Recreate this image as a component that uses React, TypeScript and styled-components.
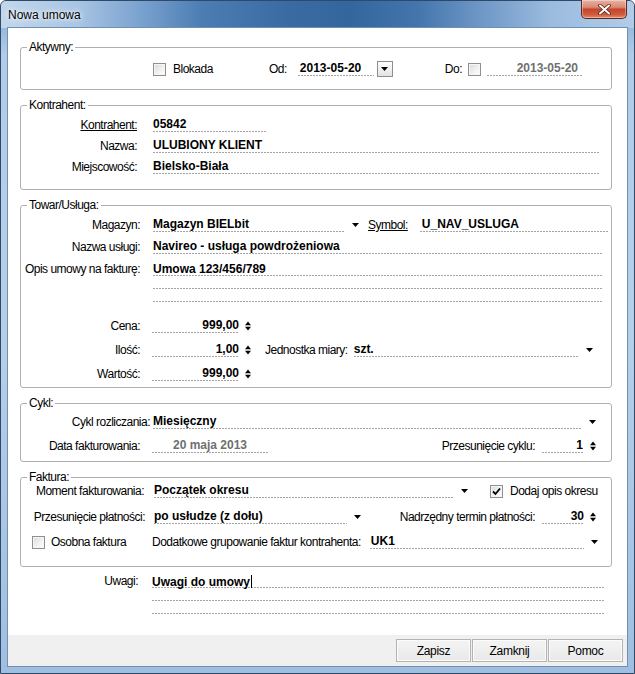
import styled, { createGlobalStyle } from "styled-components";

const GlobalStyle = createGlobalStyle`
  html, body {
    margin: 0;
    padding: 0;
    background: #ffffff;
  }

  body {
    font-family: "Liberation Sans", Arial, sans-serif;
    font-size: 12px;
    color: #000;
  }
`;

const Window = styled.div`
  box-sizing: border-box;
  width: 635px;
  height: 674px;
  display: flex;
  flex-direction: column;
  padding: 0 7px 7px 7px;
  border: 1px solid #2f4a68;
  border-radius: 6px 6px 0 0;
  background-color: #a4c2e3;
  background-image: linear-gradient(to bottom, #7fa6d1 0%, #b2cce8 8%, #b6cfe9 50%, #a0bfe0 100%);
`;

const TitleBar = styled.div`
  height: 27px;
  margin: 0 -7px;
  padding: 0 7px;
  display: flex;
  align-items: flex-start;
  justify-content: space-between;
  border-radius: 5px 5px 0 0;
  background-color: #5a87b9;
  background-image: linear-gradient(to right, #c3d7ec 0%, #a9c5e3 12%, #7aa2cf 22%, #4b7cb2 32%, #3a6ba2 45%, #34669e 55%, #4476ad 66%, #6f98c6 76%, #9bbcdf 87%, #b2cce8 100%);
`;

const Title = styled.span`
  margin-top: 7px;
  font-size: 12px;
  color: #000;
  text-shadow: 0 0 7px rgba(255, 255, 255, 0.95), 0 0 3px rgba(255, 255, 255, 0.95);
`;

const CloseButton = styled.div`
  box-sizing: border-box;
  width: 46px;
  height: 19px;
  margin-top: -1px;
  display: flex;
  align-items: center;
  justify-content: center;
  border: 1px solid #5a2a20;
  border-top: none;
  border-radius: 0 0 5px 5px;
  background: linear-gradient(to bottom, #eab2a4 0%, #d98a74 40%, #c4462c 52%, #cf5a3c 80%, #e58b6c 100%);
  box-shadow: inset 0 0 0 1px rgba(255, 255, 255, 0.35);
`;

const Client = styled.div`
  flex: 1;
  display: flex;
  flex-direction: column;
  background: #ffffff;
  box-shadow: 0 0 0 1px #6f8fb3;
`;

const Content = styled.div`
  flex: 1;
  padding: 12px 15px 0 12px;
`;

const GroupBox = styled.fieldset<{ $pt: number; $pb: number }>`
  margin: 0 0 8px 0;
  padding: ${(p) => p.$pt}px 0 ${(p) => p.$pb}px 0;
  border: 1px solid #afafaf;
  border-radius: 3px;
  min-width: 0;
`;

const Legend = styled.legend`
  margin-left: 6px;
  padding: 0 2px;
  line-height: 14px;
  font-size: 12px;
  letter-spacing: -0.5px;
`;

const Row = styled.div<{ $h: number; $mt?: number; $pl?: number }>`
  display: flex;
  align-items: center;
  height: ${(p) => p.$h}px;
  margin-top: ${(p) => p.$mt ?? 0}px;
  padding-left: ${(p) => p.$pl ?? 0}px;
`;

const TopRow = styled.div<{ $mt?: number }>`
  display: flex;
  align-items: flex-start;
  margin-top: ${(p) => p.$mt ?? 0}px;
`;

const Label = styled.span<{ $w: number; $gap: number; $lh?: number; $link?: boolean }>`
  flex-shrink: 0;
  width: ${(p) => p.$w}px;
  margin-right: ${(p) => p.$gap}px;
  text-align: right;
  white-space: nowrap;
  letter-spacing: -0.5px;
  line-height: ${(p) => p.$lh ?? 14}px;
  text-decoration: ${(p) => (p.$link ? "underline" : "none")};
`;

const Text = styled.span<{ $ml?: number; $link?: boolean }>`
  flex-shrink: 0;
  margin-left: ${(p) => p.$ml ?? 0}px;
  white-space: nowrap;
  letter-spacing: -0.5px;
  text-decoration: ${(p) => (p.$link ? "underline" : "none")};
`;

const dashes = `
  background-image: repeating-linear-gradient(to right, #a3a3a3 0 2px, transparent 2px 3px);
  background-size: 100% 1px;
  background-position: left bottom;
  background-repeat: no-repeat;
`;

const Field = styled.div<{ $w: number; $ml?: number; $align?: string; $muted?: boolean; $pl?: number; $pr?: number }>`
  box-sizing: border-box;
  flex-shrink: 0;
  width: ${(p) => p.$w}px;
  height: 14px;
  margin-left: ${(p) => p.$ml ?? 0}px;
  padding: 0 ${(p) => p.$pr ?? 0}px 0 ${(p) => p.$pl ?? 0}px;
  line-height: 13px;
  font-weight: bold;
  white-space: nowrap;
  text-align: ${(p) => p.$align ?? "left"};
  color: ${(p) => (p.$muted ? "#6f6f6f" : "#000")};
  ${dashes}
`;

const TextArea = styled.div<{ $w: number; $mt?: number }>`
  flex-shrink: 0;
  width: ${(p) => p.$w}px;
  margin-top: ${(p) => p.$mt ?? 0}px;
`;

const Line = styled.div`
  height: 13px;
  line-height: 12px;
  font-weight: bold;
  white-space: nowrap;
  ${dashes}
`;

const Caret = styled.span`
  display: inline-block;
  width: 1px;
  height: 13px;
  margin-left: 1px;
  vertical-align: -2px;
  background: #000;
`;

const Box = styled.span<{ $ml?: number }>`
  box-sizing: border-box;
  flex-shrink: 0;
  width: 13px;
  height: 13px;
  margin-left: ${(p) => p.$ml ?? 0}px;
  display: inline-flex;
  align-items: center;
  justify-content: center;
  border: 1px solid #8e8f8f;
  background: linear-gradient(135deg, #d9d9d9 0%, #f3f3f3 60%, #ffffff 100%);
  box-shadow: inset 0 0 0 1px #f6f6f6;
`;

const CheckGroup = styled.div<{ $w?: number; $ml?: number }>`
  flex-shrink: 0;
  display: flex;
  align-items: center;
  width: ${(p) => (p.$w ? `${p.$w}px` : "auto")};
  margin-left: ${(p) => p.$ml ?? 0}px;
`;

const DropButton = styled.span<{ $ml?: number }>`
  box-sizing: border-box;
  flex-shrink: 0;
  width: 16px;
  height: 16px;
  margin-left: ${(p) => p.$ml ?? 0}px;
  display: inline-flex;
  align-items: center;
  justify-content: center;
  border: 1px solid #8d8d8d;
  background: linear-gradient(to bottom, #ffffff, #e3e3e3);
`;

const IconSlot = styled.span<{ $ml?: number }>`
  flex-shrink: 0;
  display: inline-flex;
  align-items: center;
  margin-left: ${(p) => p.$ml ?? 0}px;
`;

const Push = styled.div<{ $pr: number }>`
  margin-left: auto;
  padding-right: ${(p) => p.$pr}px;
  display: flex;
  align-items: center;
`;

const ButtonBar = styled.div`
  height: 31px;
  display: flex;
  align-items: center;
  justify-content: flex-end;
  gap: 1px;
  padding-right: 4px;
  background: #f0f0f0;
`;

const Button = styled.button`
  box-sizing: border-box;
  width: 75px;
  height: 23px;
  padding: 0;
  border: 1px solid #b3b3b3;
  background: linear-gradient(to bottom, #f4f4f4, #e9e9e9);
  box-shadow: inset 0 0 0 1px #fbfbfb;
  font-family: "Liberation Sans", Arial, sans-serif;
  font-size: 12px;
  letter-spacing: -0.3px;
  color: #000;
`;

const Arrow = ({ ml }: { ml: number }) => (
  <IconSlot $ml={ml}>
    <svg width="7" height="4" viewBox="0 0 7 4">
      <path d="M0 0H7L3.5 4Z" fill="#000" />
    </svg>
  </IconSlot>
);

const Spinner = ({ ml }: { ml: number }) => (
  <IconSlot $ml={ml}>
    <svg width="6" height="10" viewBox="0 0 6 10">
      <path d="M0 4.2L3 0.5L6 4.2Z M0 5.8L3 9.5L6 5.8Z" fill="#000" />
    </svg>
  </IconSlot>
);

const CheckBox = ({ checked, ml }: { checked?: boolean; ml?: number }) => (
  <Box $ml={ml}>
    {checked && (
      <svg width="9" height="9" viewBox="0 0 9 9">
        <path d="M1 4.5L3.5 7L8 1.5" stroke="#000" strokeWidth="1.8" fill="none" />
      </svg>
    )}
  </Box>
);

export default function App() {
  return (
    <>
      <GlobalStyle />
      <Window>
        <TitleBar>
          <Title>Nowa umowa</Title>
          <CloseButton>
            <svg width="13" height="11" viewBox="0 0 13 11">
              <path d="M2 1.5L11 9.5M11 1.5L2 9.5" stroke="#5b2016" strokeWidth="3.6" strokeLinecap="round" />
              <path d="M2 1.5L11 9.5M11 1.5L2 9.5" stroke="#ffffff" strokeWidth="2" strokeLinecap="round" />
            </svg>
          </CloseButton>
        </TitleBar>
        <Client>
          <Content>
            <GroupBox $pt={5} $pb={10}>
              <Legend>Aktywny:</Legend>
              <Row $h={20} $pl={132}>
                <CheckGroup $w={116}>
                  <CheckBox />
                  <Text $ml={7}>Blokada</Text>
                </CheckGroup>
                <Text>Od:</Text>
                <Field $w={76} $ml={11} $pl={2}>2013-05-20</Field>
                <DropButton $ml={3}>
                  <svg width="7" height="4" viewBox="0 0 7 4">
                    <path d="M0 0H7L3.5 4Z" fill="#000" />
                  </svg>
                </DropButton>
                <Text $ml={52}>Do:</Text>
                <CheckBox ml={6} />
                <Field $w={95} $ml={6} $align="right" $pr={4} $muted>
                  2013-05-20
                </Field>
              </Row>
            </GroupBox>

            <GroupBox $pt={3} $pb={12}>
              <Legend>Kontrahent:</Legend>
              <Row $h={20}>
                <Label $w={116} $gap={16} $link>
                  Kontrahent:
                </Label>
                <Field $w={114}>05842</Field>
              </Row>
              <Row $h={21}>
                <Label $w={116} $gap={16}>
                  Nazwa:
                </Label>
                <Field $w={447}>ULUBIONY KLIENT</Field>
              </Row>
              <Row $h={21}>
                <Label $w={116} $gap={16}>
                  Miejscowość:
                </Label>
                <Field $w={447}>Bielsko-Biała</Field>
              </Row>
            </GroupBox>

            <GroupBox $pt={2} $pb={1}>
              <Legend>Towar/Usługa:</Legend>
              <Row $h={22}>
                <Label $w={119} $gap={13}>
                  Magazyn:
                </Label>
                <Field $w={191}>Magazyn BIELbit</Field>
                <Arrow ml={8} />
                <Text $ml={9} $link>
                  Symbol:
                </Text>
                <Field $w={188} $ml={12} $pl={2}>
                  U_NAV_USLUGA
                </Field>
              </Row>
              <Row $h={22}>
                <Label $w={119} $gap={13}>
                  Nazwa usługi:
                </Label>
                <Field $w={450}>Navireo - usługa powdrożeniowa</Field>
              </Row>
              <TopRow>
                <Label $w={119} $gap={13} $lh={22}>
                  Opis umowy na fakturę:
                </Label>
                <TextArea $w={450} $mt={5}>
                  <Line>Umowa 123/456/789</Line>
                  <Line />
                  <Line />
                </TextArea>
              </TopRow>
              <Row $h={24} $mt={12}>
                <Label $w={119} $gap={12}>
                  Cena:
                </Label>
                <Field $w={87} $align="right">
                  999,00
                </Field>
                <Spinner ml={6} />
              </Row>
              <Row $h={24}>
                <Label $w={119} $gap={12}>
                  Ilość:
                </Label>
                <Field $w={87} $align="right">
                  1,00
                </Field>
                <Spinner ml={6} />
                <Text $ml={14}>Jednostka miary:</Text>
                <Field $w={225} $ml={6}>
                  szt.
                </Field>
                <Arrow ml={7} />
              </Row>
              <Row $h={24}>
                <Label $w={119} $gap={12}>
                  Wartość:
                </Label>
                <Field $w={87} $align="right">
                  999,00
                </Field>
                <Spinner ml={6} />
              </Row>
            </GroupBox>

            <GroupBox $pt={1} $pb={4}>
              <Legend>Cykl:</Legend>
              <Row $h={22}>
                <Label $w={129} $gap={3}>
                  Cykl rozliczania:
                </Label>
                <Field $w={428}>Miesięczny</Field>
                <Arrow ml={8} />
              </Row>
              <Row $h={22} $mt={2}>
                <Label $w={119} $gap={12}>
                  Data fakturowania:
                </Label>
                <Field $w={116} $align="center" $muted>
                  20 maja 2013
                </Field>
                <Push $pr={15}>
                  <Text>Przesunięcie cyklu:</Text>
                  <Field $w={41} $ml={7} $align="right">
                    1
                  </Field>
                  <Spinner ml={7} />
                </Push>
              </Row>
            </GroupBox>

            <GroupBox $pt={0} $pb={13}>
              <Legend>Faktura:</Legend>
              <Row $h={14}>
                <Label $w={123} $gap={10}>
                  Moment fakturowania:
                </Label>
                <Field $w={299}>Początek okresu</Field>
                <Arrow ml={8} />
                <CheckGroup $ml={22}>
                  <CheckBox checked />
                  <Text $ml={7}>Dodaj opis okresu</Text>
                </CheckGroup>
              </Row>
              <Row $h={22} $mt={8}>
                <Label $w={124} $gap={9}>
                  Przesunięcie płatności:
                </Label>
                <Field $w={193}>po usłudze (z dołu)</Field>
                <Arrow ml={7} />
                <Push $pr={15}>
                  <Text>Nadrzędny termin płatności:</Text>
                  <Field $w={42} $ml={7} $align="right">
                    30
                  </Field>
                  <Spinner ml={6} />
                </Push>
              </Row>
              <Row $h={22} $mt={3} $pl={11}>
                <CheckGroup $w={120}>
                  <CheckBox />
                  <Text $ml={6}>Osobna faktura</Text>
                </CheckGroup>
                <Text>Dodatkowe grupowanie faktur kontrahenta:</Text>
                <Field $w={214} $ml={9} $pl={1}>
                  UK1
                </Field>
                <Arrow ml={7} />
              </Row>
            </GroupBox>

            <TopRow>
              <Label $w={118} $gap={14} $lh={13}>
                Uwagi:
              </Label>
              <TextArea $w={453}>
                <Line>
                  Uwagi do umowy
                  <Caret />
                </Line>
                <Line />
                <Line />
              </TextArea>
            </TopRow>
          </Content>
          <ButtonBar>
            <Button>Zapisz</Button>
            <Button>Zamknij</Button>
            <Button>Pomoc</Button>
          </ButtonBar>
        </Client>
      </Window>
    </>
  );
}
